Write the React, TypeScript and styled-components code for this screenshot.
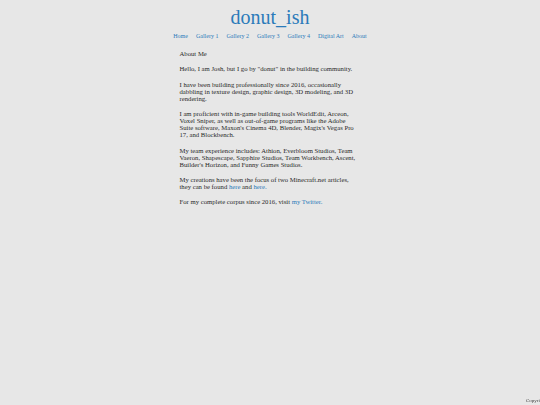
import styled, { createGlobalStyle } from "styled-components";

const Global = createGlobalStyle`
  html, body {
    margin: 0;
    padding: 0;
    background: #e7e7e7;
    overflow: hidden;
  }
  body {
    font-family: "Liberation Serif", "Times New Roman", serif;
    color: #2a2a2a;
  }
`;

const Page = styled.div`
  min-height: 405px;
  display: flex;
  flex-direction: column;
  align-items: center;
`;

const Header = styled.header`
  display: flex;
  flex-direction: column;
  align-items: center;
  padding-top: 5px;
`;

const Title = styled.h1`
  margin: 0;
  font-size: 20px;
  font-weight: normal;
  line-height: 24px;
  color: #2b7bba;
`;

const Nav = styled.nav`
  display: flex;
  gap: 8px;
  margin-top: 3px;
`;

const NavLink = styled.a`
  font-size: 6px;
  line-height: 8px;
  color: #2b7bba;
  text-decoration: none;
`;

const Content = styled.main`
  width: 180px;
  margin-top: 10px;
  margin-right: 1px;
  font-size: 6.7px;
  line-height: 7.1px;
`;

const Para = styled.p`
  margin: 0 0 8.2px;
`;

const Link = styled.a`
  color: #2b7bba;
  text-decoration: none;
`;

const Footer = styled.footer`
  position: fixed;
  left: 526px;
  bottom: 1px;
  font-size: 5px;
  line-height: 6px;
  color: #444;
  white-space: nowrap;
`;

const links = ["Home", "Gallery 1", "Gallery 2", "Gallery 3", "Gallery 4", "Digital Art", "About"];

export default function App() {
  return (
    <>
      <Global />
      <Page>
        <Header>
          <Title>donut_ish</Title>
          <Nav>
            {links.map((l) => (
              <NavLink key={l} href="#">
                {l}
              </NavLink>
            ))}
          </Nav>
        </Header>
        <Content>
          <Para>About Me</Para>
          <Para>Hello, I am Josh, but I go by "donut" in the building community.</Para>
          <Para>
            I have been building professionally since 2016, occasionally dabbling in texture design,
            graphic design, 3D modeling, and 3D rendering.
          </Para>
          <Para>
            I am proficient with in-game building tools WorldEdit, Arceon, Voxel Sniper, as well as
            out-of-game programs like the Adobe Suite software, Maxon's Cinema 4D, Blender, Magix's
            Vegas Pro 17, and Blockbench.
          </Para>
          <Para>
            My team experience includes: Athion, Everbloom Studios, Team Vaeron, Shapescape, Sapphire
            Studios, Team Workbench, Ascent, Builder's Horizon, and Funny Games Studios.
          </Para>
          <Para>
            My creations have been the focus of two Minecraft.net articles, they can be found{" "}
            <Link href="#">here</Link> and <Link href="#">here.</Link>
          </Para>
          <Para>
            For my complete corpus since 2016, visit <Link href="#">my Twitter.</Link>
          </Para>
        </Content>
        <Footer>Copyright</Footer>
      </Page>
    </>
  );
}
